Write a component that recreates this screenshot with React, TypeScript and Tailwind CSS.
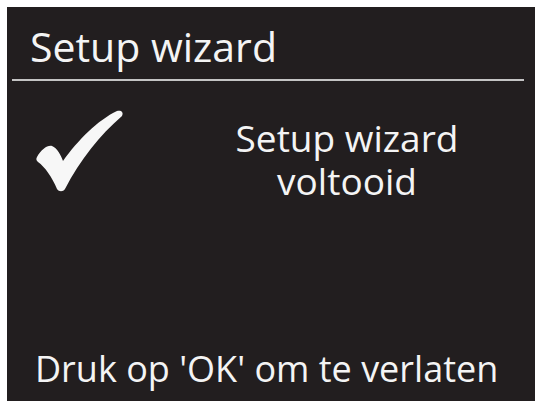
import React from 'react';

// Check mark drawn in page coordinates (viewBox matches its spot on screen)
const CheckMark: React.FC = () => (
  <svg width="90" height="84" viewBox="36 108 90 84" className="shrink-0">
    <path
      d="M37 157 C 41 150, 47 145, 52 146 C 57 148, 61 155, 63 161 C 78 140, 98 120, 117 111 C 121 110, 124 112, 122 116 C 100 135, 80 160, 65 189 C 63 192, 59 192, 57 189 C 52 177, 45 167, 38 162 C 36 160, 36 159, 37 157 Z"
      fill="#f7f7f7"
    />
  </svg>
);

const App: React.FC = () => {
  return (
    <div className="w-[535px] h-[401px] bg-white pl-[7px] pt-[7px] overflow-hidden">
      <div
        className="w-full h-full bg-[#221e1f] text-[#f4f4f4] flex flex-col"
        style={{ fontFamily: '"Open Sans", "Noto Sans", sans-serif' }}
      >
        {/* Header */}
        <div className="pt-[19px] pl-[23px] text-[41px] leading-none">Setup wizard</div>
        <div className="mt-[12px] ml-[5px] mr-[11px] h-[2px] bg-[#c4c4c4]" />

        {/* Body */}
        <div className="mt-[27px] flex items-start pl-[29px]">
          <CheckMark />
          <div className="ml-[71px] mt-[11px] w-[300px] flex flex-col items-center gap-[6px] text-[37px] leading-none">
            <span>Setup wizard</span>
            <span>voltooid</span>
          </div>
        </div>

        <div className="flex-1" />

        {/* Footer */}
        <div className="pl-[28px] pb-[14px] text-[36px] leading-none whitespace-nowrap">
          Druk op 'OK' om te verlaten
        </div>
      </div>
    </div>
  );
};

export default App;
